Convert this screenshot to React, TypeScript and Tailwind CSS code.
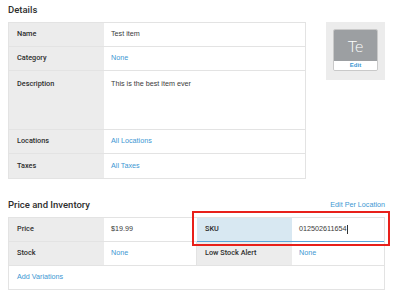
import React from "react";

const font = { fontFamily: '"Liberation Sans", Arial, sans-serif' };
const heading = { fontFamily: 'Roboto, "Liberation Sans", Arial, sans-serif' };

function Row({ label, children, tall = false }: { label: string; children: React.ReactNode; tall?: boolean }) {
  return (
    <div className={`flex border-b border-[#e3e3e3] last:border-b-0 ${tall ? "h-[59px]" : "h-[24px]"}`}>
      <div
        className={`w-[95px] shrink-0 bg-[#ececec] px-[8px] flex ${tall ? "items-start pt-[8px]" : "items-center"} text-[7.3px] font-medium text-[#2e2e2e]`}
        style={heading}
      >
        {label}
      </div>
      <div className={`flex-1 px-[7px] flex ${tall ? "items-start pt-[8px]" : "items-center"} text-[7.2px] text-[#3a3a3a]`}>
        {children}
      </div>
    </div>
  );
}

export default function App() {
  return (
    <div className="w-[400px] h-[307px] bg-white pl-[8px] pt-[4px] overflow-hidden" style={font}>
      {/* Details */}
      <div className="text-[9.5px] leading-[12px] font-medium text-[#2e2e2e] mb-[6px]" style={heading}>Details</div>
      <div className="flex items-start">
        <div className="w-[298px] border border-[#e3e3e3]">
          <Row label="Name">Test item</Row>
          <Row label="Category"><span className="text-[#3d97d3]">None</span></Row>
          <Row label="Description" tall>This is the best item ever</Row>
          <Row label="Locations"><span className="text-[#3d97d3]">All Locations</span></Row>
          <Row label="Taxes"><span className="text-[#3d97d3]">All Taxes</span></Row>
        </div>
        <div className="ml-[20px] w-[59px] h-[58px] bg-[#ececec] p-[7px]">
          <div className="w-[45px] h-[42px] rounded-[2px] border border-[#c9c9c9] overflow-hidden flex flex-col">
            <div
              className="flex-1 bg-[#9c9fa2] flex items-center justify-center text-white text-[16px] font-light leading-none"
              style={{ fontFamily: 'Lato, "Open Sans", sans-serif' }}
            >
              Te
            </div>
            <div className="h-[9px] bg-white flex items-center justify-center text-[6px] font-bold text-[#3d97d3]">Edit</div>
          </div>
        </div>
      </div>

      {/* Price and Inventory */}
      <div className="flex items-center justify-between w-[377px] mt-[20px] mb-[6px]">
        <div className="text-[9.5px] leading-[12px] font-medium text-[#2e2e2e]" style={heading}>Price and Inventory</div>
        <div className="text-[7.2px] text-[#3d97d3]">Edit Per Location</div>
      </div>
      <div className="relative w-[377px] border border-[#e3e3e3]">
        <div className="flex h-[24px] border-b border-[#e3e3e3]">
          <div className="w-[95px] bg-[#ececec] px-[8px] flex items-center text-[7.3px] font-medium text-[#2e2e2e]" style={heading}>Price</div>
          <div className="w-[93px] px-[7px] flex items-center text-[7.2px] text-[#3a3a3a]">$19.99</div>
          <div className="flex flex-1 border-b border-[#5ca6d8] -mb-[1px]">
            <div className="w-[95px] bg-[#d8e8f2] px-[8px] flex items-center text-[7.3px] font-medium text-[#2e2e2e]" style={heading}>SKU</div>
            <div className="flex-1 px-[7px] flex items-center text-[7.2px] text-[#3a3a3a]">
              012502611654<span className="w-px h-[9px] bg-[#333] ml-px" />
            </div>
          </div>
        </div>
        <div className="flex h-[24px] border-b border-[#e3e3e3]">
          <div className="w-[95px] bg-[#ececec] px-[8px] flex items-center text-[7.3px] font-medium text-[#2e2e2e]" style={heading}>Stock</div>
          <div className="w-[93px] px-[7px] flex items-center text-[7.2px] text-[#3d97d3] border-r border-[#e3e3e3]">None</div>
          <div className="w-[95px] bg-[#ececec] px-[8px] flex items-center text-[7.3px] font-medium text-[#2e2e2e]" style={heading}>Low Stock Alert</div>
          <div className="flex-1 px-[7px] flex items-center text-[7.2px] text-[#3d97d3]">None</div>
        </div>
        <div className="h-[23px] px-[8px] flex items-center text-[7.2px] text-[#3d97d3]">Add Variations</div>

        {/* annotation */}
        <div className="absolute left-[183px] top-[-7px] w-[198px] h-[35px] border-2 border-[#e8201a] pointer-events-none" />
      </div>
    </div>
  );
}
